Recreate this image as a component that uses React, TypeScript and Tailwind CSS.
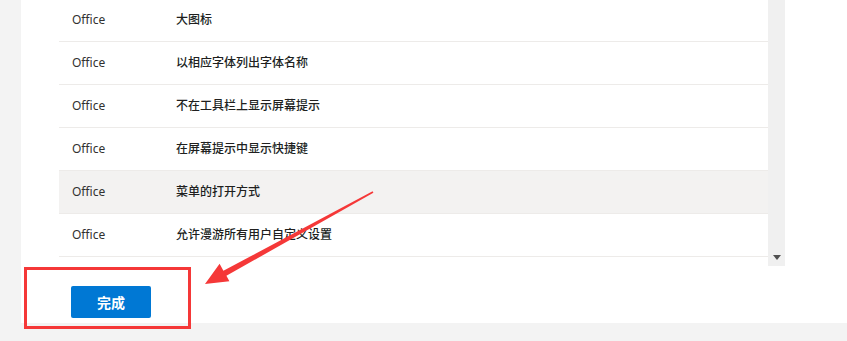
import React from 'react'

const rows = [
  '大图标',
  '以相应字体列出字体名称',
  '不在工具栏上显示屏幕提示',
  '在屏幕提示中显示快捷键',
  '菜单的打开方式',
  '允许漫游所有用户自定义设置',
]

export default function App() {
  return (
    <div className="relative w-[847px] h-[341px] overflow-hidden bg-[#f3f3f3] flex font-['Noto_Sans','Noto_Sans_CJK_SC',sans-serif] text-[#323130]">
      <div className="w-[21px] shrink-0" />
      <div className="flex-1 h-[323px] bg-white flex flex-col">
        <div className="flex h-[266px] pl-[38px]">
          <div className="w-[709px] h-full overflow-hidden">
            <div className="-mt-[1px]">
              {rows.map((r, i) => (
                <div
                  key={r}
                  className={`flex items-center h-[43px] border-b border-[#edebe9] text-[12px] ${i === 4 ? 'bg-[#f3f2f1]' : ''}`}
                >
                  <div className="w-[117px] pl-[13px] -mt-[1px]">Office</div>
                  <div className="font-medium text-[#201f1e] -mt-[1px]">{r}</div>
                </div>
              ))}
            </div>
          </div>
          <div className="w-[17px] h-full bg-[#f0f0f0] flex items-end justify-center pb-[6px]">
            <svg width="8" height="5" viewBox="0 0 8 5">
              <path d="M0 0h8L4 5z" fill="#505050" />
            </svg>
          </div>
        </div>
        <div className="pl-[50px] pt-[20px]">
          <button className="w-[80px] h-[32px] rounded-[2px] bg-[#0078d4] text-white text-[14px] font-bold">
            完成
          </button>
        </div>
      </div>

      <div className="absolute left-[24px] top-[267px] w-[167px] h-[62px] border-[3px] border-[#f53838]" />
      <svg className="absolute left-0 top-0" width="847" height="341" viewBox="0 0 847 341">
        <polygon
          points="372.6,191.2 223.4,270.8 219.6,263.8 205,284 229.4,281.2 226.4,275.8 373.4,192.8"
          fill="#f53838"
        />
      </svg>
    </div>
  )
}
